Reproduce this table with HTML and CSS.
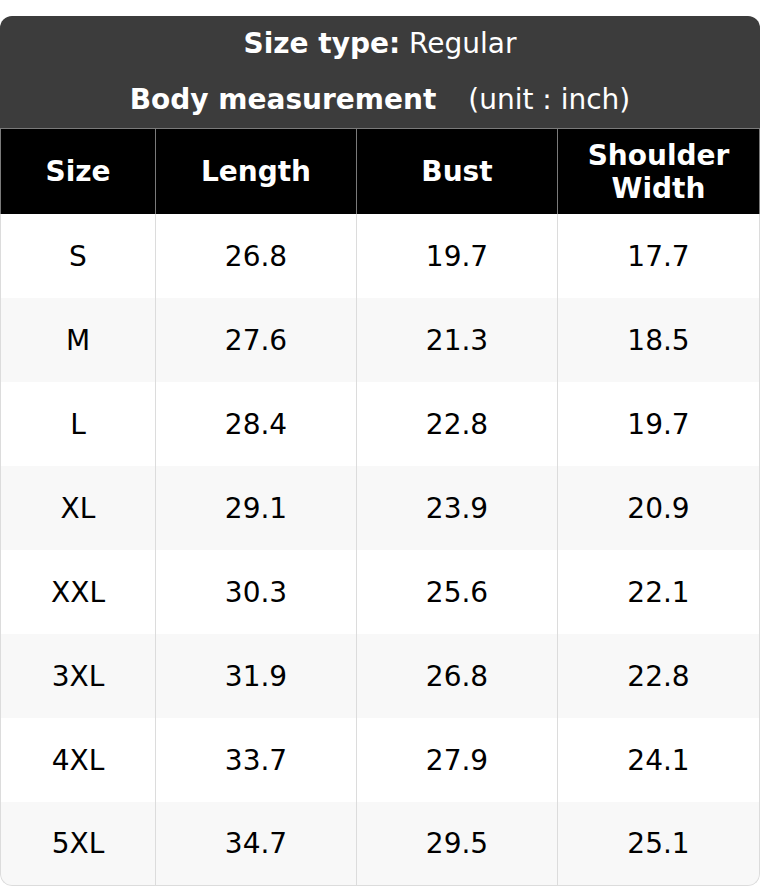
FILE: index.html
```html
<!DOCTYPE html>
<html>
<head>
<meta charset="utf-8">
<link rel="stylesheet" href="styles.css">
</head>
<body>
<div class="card">
  <div class="title">
    <div class="title-line"><b>Size type:</b> Regular</div>
    <div class="title-line"><b>Body measurement</b><span class="unit">(unit : inch)</span></div>
  </div>
  <div class="row head">
    <div class="cell">Size</div>
    <div class="cell">Length</div>
    <div class="cell">Bust</div>
    <div class="cell">Shoulder<br>Width</div>
  </div>
  <div class="row"><div class="cell">S</div><div class="cell">26.8</div><div class="cell">19.7</div><div class="cell">17.7</div></div>
  <div class="row alt"><div class="cell">M</div><div class="cell">27.6</div><div class="cell">21.3</div><div class="cell">18.5</div></div>
  <div class="row"><div class="cell">L</div><div class="cell">28.4</div><div class="cell">22.8</div><div class="cell">19.7</div></div>
  <div class="row alt"><div class="cell">XL</div><div class="cell">29.1</div><div class="cell">23.9</div><div class="cell">20.9</div></div>
  <div class="row"><div class="cell">XXL</div><div class="cell">30.3</div><div class="cell">25.6</div><div class="cell">22.1</div></div>
  <div class="row alt"><div class="cell">3XL</div><div class="cell">31.9</div><div class="cell">26.8</div><div class="cell">22.8</div></div>
  <div class="row"><div class="cell">4XL</div><div class="cell">33.7</div><div class="cell">27.9</div><div class="cell">24.1</div></div>
  <div class="row alt last"><div class="cell">5XL</div><div class="cell">34.7</div><div class="cell">29.5</div><div class="cell">25.1</div></div>
</div>
</body>
</html>
```
FILE: styles.css
```css
html, body {
  margin: 0;
  padding: 0;
  background: #ffffff;
}
body {
  font-family: "DejaVu Sans", "Liberation Sans", sans-serif;
  font-size: 28px;
  color: #000;
}
.card {
  margin-top: 16px;
  width: 760px;
  border-radius: 12px;
  overflow: hidden;
}
.title {
  background: #3c3c3c;
  color: #fff;
  text-align: center;
  height: 112px;
}
.title-line {
  line-height: 55px;
  height: 55px;
}
.title-line + .title-line {
  line-height: 57px;
  height: 57px;
}
.unit {
  margin-left: 32px;
}
.row {
  display: grid;
  grid-template-columns: 155px 201px 201px 203px;
  height: 84px;
  background: #fff;
}
.row.alt {
  background: #f8f8f8;
}
.cell {
  display: flex;
  align-items: center;
  justify-content: center;
  text-align: center;
  border-left: 1px solid #dcdcdc;
}
.cell:last-child {
  border-right: 1px solid #dcdcdc;
}
.row.head {
  height: 85px;
  background: #000;
  color: #fff;
  font-weight: bold;
  line-height: 33px;
  border-top: 1px solid #7a7a7a;
}
.row.head .cell {
  border-color: #7a7a7a;
}
.row.last .cell {
  border-bottom: 1px solid #dcdcdc;
}
.row.last .cell:first-child {
  border-bottom-left-radius: 12px;
}
.row.last .cell:last-child {
  border-bottom-right-radius: 12px;
}
```
